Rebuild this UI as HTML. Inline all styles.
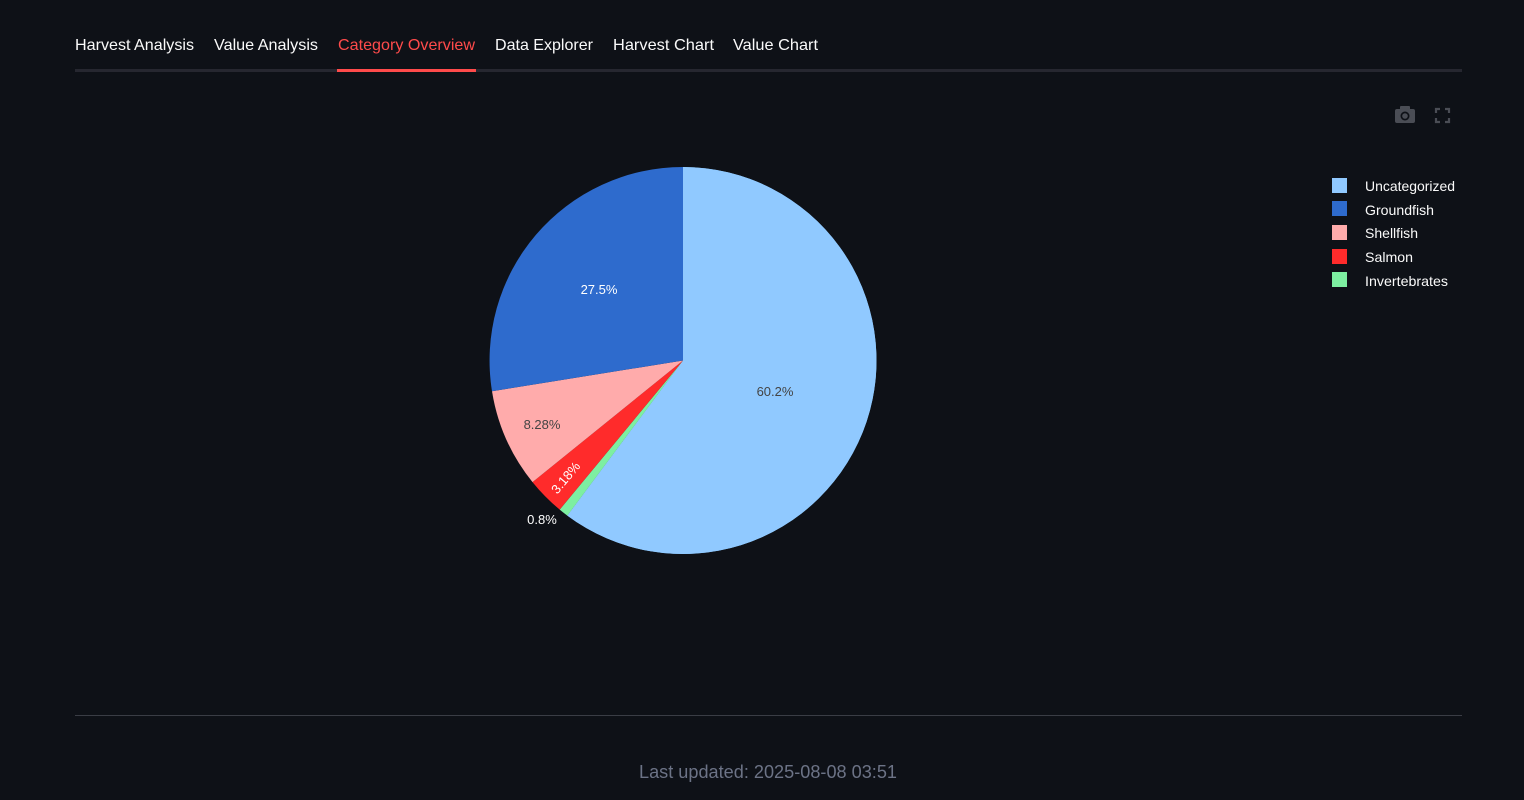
<!DOCTYPE html>
<html><head><meta charset="utf-8"><style>
html,body{margin:0;padding:0;background:#0e1117;}
svg{display:block}
text{font-family:"Liberation Sans",sans-serif;}
</style></head><body>
<svg width="1524" height="800" viewBox="0 0 1524 800" xmlns="http://www.w3.org/2000/svg">
<rect width="1524" height="800" fill="#0e1117"/>
<!-- tabs -->
<g font-size="16" fill="#fafafa">
<text x="75" y="50" textLength="119" lengthAdjust="spacingAndGlyphs">Harvest Analysis</text>
<text x="214" y="50" textLength="104" lengthAdjust="spacingAndGlyphs">Value Analysis</text>
<text x="338" y="50" textLength="137" lengthAdjust="spacingAndGlyphs" fill="#ff4b4b">Category Overview</text>
<text x="495" y="50" textLength="98" lengthAdjust="spacingAndGlyphs">Data Explorer</text>
<text x="613" y="50" textLength="101" lengthAdjust="spacingAndGlyphs">Harvest Chart</text>
<text x="733" y="50" textLength="85" lengthAdjust="spacingAndGlyphs">Value Chart</text>
</g>
<rect x="75" y="69" width="1387" height="3" fill="#262730"/>
<rect x="337" y="69" width="139" height="3" fill="#ff4b4b"/>
<!-- toolbar icons -->
<g fill="#4a4d55">
<rect x="1395" y="109" width="20" height="14" rx="2"/>
<rect x="1400" y="106" width="10" height="4" rx="1"/>
<circle cx="1405" cy="116" r="4.5" fill="#0e1117"/>
<circle cx="1405" cy="116" r="2.8"/>
</g>
<g stroke="#4a4d55" stroke-width="2.2" fill="none">
<path d="M1436 113v-4h4M1445 109h4v4M1449 118v4h-4M1440 122h-4v-4"/>
</g>
<!-- pie -->
<path d="M683 360.5 L683 167 A193.5 193.5 0 1 1 567.3 515.6 Z" fill="#83c9ff" opacity="0.92"/>
<path d="M683 360.5 L683 167 A193.5 193.5 0 1 1 567.3 515.6 Z" fill="#90c9ff"/>
<path d="M683 360.5 L567.3 515.6 A193.5 193.5 0 0 1 559.7 509.6 Z" fill="#7defa1"/>
<path d="M683 360.5 L559.7 509.6 A193.5 193.5 0 0 1 532.5 482.1 Z" fill="#ff2b2b"/>
<path d="M683 360.5 L532.5 482.1 A193.5 193.5 0 0 1 492.0 391.2 Z" fill="#ffabab"/>
<path d="M683 360.5 L492.0 391.2 A193.5 193.5 0 0 1 683 167 Z" fill="#2e6bcd"/>
<g font-size="13" text-anchor="middle">
<text x="775" y="396" fill="#444">60.2%</text>
<text x="599" y="294" fill="#fff">27.5%</text>
<text x="542" y="429" fill="#444">8.28%</text>
<text x="542" y="524" fill="#fff">0.8%</text>
<text x="0" y="0" fill="#fff" transform="translate(566 478) rotate(-50)" dy="4">3.18%</text>
</g>
<!-- legend -->
<g>
<rect x="1332" y="178" width="15" height="15" fill="#90c9ff"/>
<rect x="1332" y="201" width="15" height="15" fill="#2e6bcd"/>
<rect x="1332" y="225" width="15" height="15" fill="#ffabab"/>
<rect x="1332" y="249" width="15" height="15" fill="#ff2b2b"/>
<rect x="1332" y="272" width="15" height="15" fill="#7defa1"/>
</g>
<g font-size="14" fill="#fafafa">
<text x="1365" y="191" textLength="90" lengthAdjust="spacingAndGlyphs">Uncategorized</text>
<text x="1365" y="215" textLength="69" lengthAdjust="spacingAndGlyphs">Groundfish</text>
<text x="1365" y="238" textLength="53" lengthAdjust="spacingAndGlyphs">Shellfish</text>
<text x="1365" y="262" textLength="48" lengthAdjust="spacingAndGlyphs">Salmon</text>
<text x="1365" y="286" textLength="83" lengthAdjust="spacingAndGlyphs">Invertebrates</text>
</g>
<!-- footer -->
<rect x="75" y="715" width="1387" height="1" fill="#3a3d45"/>
<text x="768" y="778" font-size="18" fill="#6c7386" text-anchor="middle" textLength="258" lengthAdjust="spacingAndGlyphs">Last updated: 2025-08-08 03:51</text>
</svg>
</body></html>
